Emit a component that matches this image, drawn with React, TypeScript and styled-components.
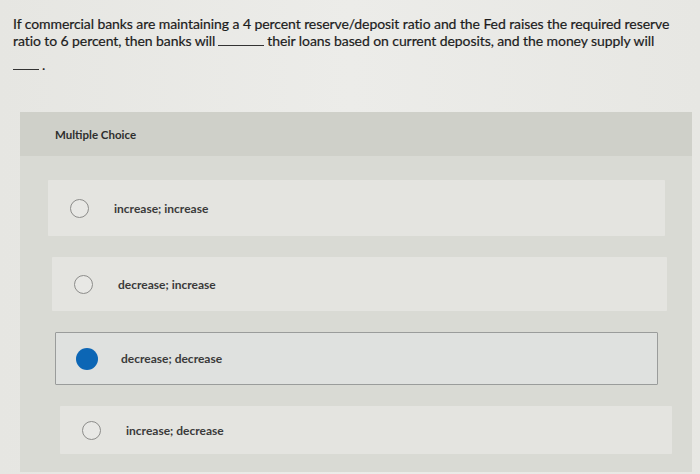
import styled, { createGlobalStyle } from 'styled-components';

const GlobalStyle = createGlobalStyle`
  html, body {
    margin: 0;
    padding: 0;
    background: #e9e9e5;
  }
  body {
    font-family: Lato, "Open Sans", "Liberation Sans", sans-serif;
    color: #222;
  }
`;

const Page = styled.div`
  width: 700px;
  height: 474px;
  overflow: hidden;
  background: linear-gradient(90deg, #e6e6e2 0%, #ecece9 50%, #e7e7e3 100%);
`;

const Question = styled.p`
  margin: 0;
  padding: 15px 0 0 13px;
  height: 112px;
  box-sizing: border-box;
  font-size: 14px;
  line-height: 17px;
  color: #1c1c1c;
  letter-spacing: -0.08px;
  -webkit-text-stroke: 0.2px #1c1c1c;
`;

const Blank = styled.span<{ $width: number }>`
  display: inline-block;
  width: ${(p) => p.$width}px;
  border-bottom: 1px solid #333;
  margin: 0 3px 0 3px;
  vertical-align: baseline;
`;

const BlankLine = styled.span`
  display: block;
  margin-top: 7px;
  margin-left: -3px;
`;

const Panel = styled.section`
  margin-left: 20px;
  width: 672px;
  height: 360px;
  background: #d9dad4;
`;

const PanelHeader = styled.header`
  height: 44px;
  display: flex;
  align-items: center;
  padding-left: 35px;
  background: #cfd0c9;
  font-size: 11.5px;
  font-weight: 700;
  color: #2e2e2e;
`;

const Options = styled.ul`
  list-style: none;
  margin: 0;
  padding: 24px 0 0 0;
  display: flex;
  flex-direction: column;
  gap: 21px;
`;

const Option = styled.li<{ $indent: number; $height: number; $width: number; $selected?: boolean }>`
  display: flex;
  align-items: center;
  margin-left: ${(p) => p.$indent}px;
  width: ${(p) => p.$width}px;
  height: ${(p) => p.$height}px;
  box-sizing: border-box;
  padding-left: ${(p) => (p.$selected ? 20 : 21)}px;
  gap: ${(p) => (p.$selected ? 23 : 25)}px;
  background: ${(p) => (p.$selected ? '#dfe1df' : '#e4e4e0')};
  border: ${(p) => (p.$selected ? '1.5px solid #9a9c9b' : '1px solid transparent')};
  border-radius: 1px;
  font-size: 12px;
  font-weight: 700;
  color: #3a3a3a;
`;

const Radio = styled.span<{ $checked?: boolean }>`
  flex: none;
  width: 19px;
  height: 19px;
  border-radius: 50%;
  box-sizing: border-box;
  border: ${(p) => (p.$checked ? 'none' : '1.5px solid #8c8c8a')};
  background: ${(p) => (p.$checked ? '#0c66b5' : '#e8e8e5')};
  ${(p) => (p.$checked ? 'width: 22px; height: 22px;' : '')}
`;

const choices = [
  { label: 'increase; increase', indent: 28, height: 56, width: 617 },
  { label: 'decrease; increase', indent: 32, height: 54, width: 615 },
  { label: 'decrease; decrease', indent: 35, height: 53, width: 603, selected: true },
  { label: 'increase; decrease', indent: 40, height: 48, width: 612 },
];

export default function App() {
  return (
    <Page>
      <GlobalStyle />
      <Question>
        If commercial banks are maintaining a 4 percent reserve/deposit ratio and the Fed raises the required reserve
        <br />
        ratio to 6 percent, then banks will
        <Blank $width={46} />
        their loans based on current deposits, and the money supply will
        <BlankLine>
          <Blank $width={26} />.
        </BlankLine>
      </Question>
      <Panel>
        <PanelHeader>Multiple Choice</PanelHeader>
        <Options>
          {choices.map((c) => (
            <Option
              key={c.label}
              $indent={c.indent}
              $height={c.height}
              $width={c.width}
              $selected={c.selected}
            >
              <Radio $checked={c.selected} />
              {c.label}
            </Option>
          ))}
        </Options>
      </Panel>
    </Page>
  );
}
